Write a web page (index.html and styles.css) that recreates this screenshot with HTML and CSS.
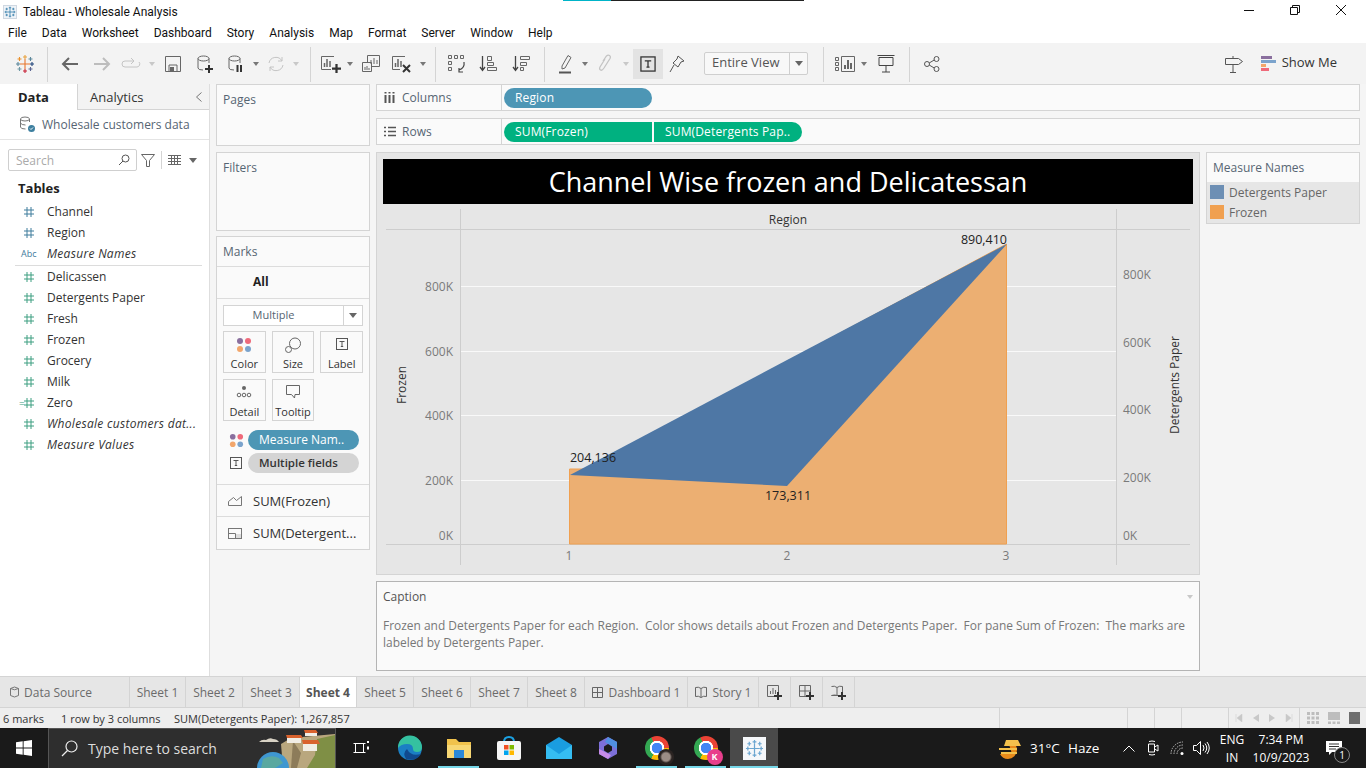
FILE: index.html
```html
<!DOCTYPE html>
<html lang="en">
<head>
    <meta charset="UTF-8">
    <meta name="viewport" content="width=device-width, initial-scale=1.0">
    <title>Tableau - Wholesale Analysis</title>
    <link rel="stylesheet" href="styles.css">
</head>
<body>
    <svg class="defs" width="0" height="0">
        <symbol id="hash" viewBox="0 0 12 12"><path d="M4 1v10M8 1v10M1 4h10M1 8h10" fill="none" stroke="currentColor" stroke-width="1"/></symbol>
        <symbol id="cross" viewBox="0 0 20 20"><g fill="none" stroke="currentColor" stroke-width="1.3"><path d="M10 5v10M5 10h10"/><path d="M10 1v4M8 3h4M10 15v4M8 17h4M1 10h4M3 8v4M15 10h4M17 8v4M4.500 3v4M2.500 5h4M15.500 3v4M13.500 5h4M4.500 13v4M2.500 15h4M15.500 13v4M13.500 15h4"/></g></symbol>
        <symbol id="t-box" viewBox="0 0 14 14"><rect x="1.500" y="1.500" width="11" height="11" fill="none" stroke="currentColor"/><path d="M4.500 4.500h5M7 4.500v5M5.800 9.500h2.400" fill="none" stroke="currentColor"/></symbol>
        <symbol id="dots" viewBox="0 0 16 16"><circle cx="4" cy="4" r="3" fill="#8a6f9e"/><circle cx="12" cy="4" r="3" fill="#ef6a7a"/><circle cx="4" cy="12" r="3" fill="#f2a66b"/><circle cx="12" cy="12" r="3" fill="#7ba3cc"/></symbol>
        <symbol id="plus" viewBox="0 0 8 8"><path d="M4 0v8M0 4h8" stroke="#333" stroke-width="2"/></symbol>
    </svg>

    <header class="titlebar">
        <span class="top-strip"><i class="strip-teal"></i><i class="strip-dark"></i></span>
        <svg class="title-logo" width="14" height="14"><rect x="0.500" y="0.500" width="13" height="13" fill="#eef3f8" stroke="#cfd8e2"/><use href="#cross" x="1" y="1" width="12" height="12" color="#2e79a8"/></svg>
        <span class="title-text">Tableau - Wholesale Analysis</span>
        <div class="window-btns">
            <svg width="12" height="12"><path d="M1 6.500h10" stroke="#111"/></svg>
            <svg width="12" height="12"><path d="M1.500 3.500h7v7h-7zM3.500 3.500v-2h7v7h-2" fill="none" stroke="#111"/></svg>
            <svg width="12" height="12"><path d="M1 1l10 10M11 1L1 11" stroke="#111"/></svg>
        </div>
    </header>

    <nav class="menubar">
        <span>File</span><span>Data</span><span>Worksheet</span><span>Dashboard</span><span>Story</span><span>Analysis</span><span>Map</span><span>Format</span><span>Server</span><span>Window</span><span>Help</span>
    </nav>

    <div class="toolbar">
        <span class="tb w33"><svg width="20" height="20" viewBox="0 0 20 20"><g fill="none" stroke-width="1.100"><path d="M10 5v10M5 10h10" stroke="#e8762d"/><path d="M10 1v4M8 3h4" stroke="#e8a23d"/><path d="M10 15v4M8 17h4" stroke="#c72035"/><path d="M1 10h4M3 8v4" stroke="#5b879b"/><path d="M15 10h4M17 8v4" stroke="#1f447b"/><path d="M4.500 3v4M2.500 5h4" stroke="#eb912b"/><path d="M15.500 3v4M13.500 5h4" stroke="#5b879b"/><path d="M4.500 13v4M2.500 15h4" stroke="#7099a6"/><path d="M15.500 13v4M13.500 15h4" stroke="#5c6692"/></g></svg></span>
        <i class="sep"></i>
        <span class="tb w32"><svg width="18" height="16"><path d="M17 8H2M8 2L2 8l6 6" fill="none" stroke="#666" stroke-width="2"/></svg></span>
        <span class="tb w32"><svg width="18" height="16"><path d="M1 8h15M10 2l6 6-6 6" fill="none" stroke="#bdbdbd" stroke-width="2"/></svg></span>
        <span class="tb w26"><svg width="20" height="12"><path d="M12 3H4a3 3 0 0 0 0 6h12a3 3 0 0 0 2-5M10 0l3 3-3 3" fill="none" stroke="#c4c4c4"/></svg></span>
        <span class="tb w16"><i class="caret off"></i></span>
        <span class="tb w26"><svg width="16" height="16"><path d="M.5.500h15v15H.5zM4 15V9h8v6" fill="none" stroke="#666"/><rect x="5" y="11" width="4" height="4" fill="#666"/></svg></span>
        <span class="tb w38"><svg width="16" height="18"><ellipse cx="6.500" cy="3.500" rx="5.500" ry="2.500" fill="none" stroke="#666"/><path d="M1 3.500V13q0 2 5 2M12 3.500V8" fill="none" stroke="#666"/><use href="#plus" x="8" y="10" width="8" height="8"/></svg></span>
        <span class="tb w24"><svg width="16" height="18"><ellipse cx="6.500" cy="3.500" rx="5.500" ry="2.500" fill="none" stroke="#666"/><path d="M1 3.500V13q0 2 5 2M12 3.500V8" fill="none" stroke="#666"/><path d="M9.500 10v7M13 10v7" stroke="#333" stroke-width="2"/></svg></span>
        <span class="tb w16"><i class="caret"></i></span>
        <span class="tb w24"><svg width="18" height="18"><path d="M2 8a7 7 0 0 1 13-2M16 10a7 7 0 0 1-13 2M15 2v4h-4M3 16v-4h4" fill="none" stroke="#c4c4c4"/></svg></span>
        <span class="tb w16"><i class="caret off"></i></span>
        <i class="sep"></i>
        <span class="tb w28"><svg width="20" height="18"><path d="M13 1.500H.5v13H10" fill="none" stroke="#666"/><path d="M3.500 12V8M6 12V4M9 12V6" stroke="#666" stroke-width="1.500"/><use href="#plus" x="11" y="9" width="9" height="9"/></svg></span>
        <span class="tb w10"><i class="caret"></i></span>
        <span class="tb w32"><svg width="18" height="18"><path d="M5.500 7V.5h12v11H9" fill="none" stroke="#666"/><path d="M.5 7.500h9v9h-9z" fill="#f3f3f3" stroke="#666"/><path d="M9 9V5M12 9V3M15 9V5M3 15v-3M5 15v-4M7 15v-2" stroke="#666"/></svg></span>
        <span class="tb w30"><svg width="20" height="18"><path d="M13 1.500H.5v13H8" fill="none" stroke="#666"/><path d="M3.500 12V8M6 12V4M9 12V6" stroke="#666" stroke-width="1.500"/><path d="M11 10l7 7M18 10l-7 7" stroke="#333" stroke-width="2"/></svg></span>
        <span class="tb w12"><i class="caret"></i></span>
        <i class="sep"></i>
        <span class="tb w30"><svg width="18" height="18"><path d="M.5.500h3v3h-3zM6.500.500h3v3h-3zM12.500.500h3v3h-3zM.5 6.500h3v3h-3zM.5 12.500h3v3h-3z" fill="none" stroke="#666"/><path d="M16 7q1 6-5 8M11 13v4h4M6 15" fill="none" stroke="#444" stroke-width="1.200"/></svg></span>
        <span class="tb w32"><svg width="18" height="18"><path d="M3.500 1v14M1 12l2.500 3.500L6 12" fill="none" stroke="#444" stroke-width="1.300"/><path d="M8.500 1.500h4v4h-4zM8.500 7.500h6v3h-6zM8.500 12.500h9v3h-9z" fill="none" stroke="#666"/></svg></span>
        <span class="tb w34"><svg width="18" height="18"><path d="M3.500 1v14M1 12l2.500 3.500L6 12" fill="none" stroke="#444" stroke-width="1.300"/><path d="M8.500 1.500h9v3h-9zM8.500 7.500h6v3h-6zM8.500 12.500h3v3h-3z" fill="none" stroke="#666"/></svg></span>
        <i class="sep"></i>
        <span class="tb w30"><svg width="14" height="20"><path d="M3 12L9 1.500l3 2-6 10.500-3 1z" fill="none" stroke="#666"/><path d="M0 18.500h12" stroke="#555" stroke-width="2"/></svg></span>
        <span class="tb w8"><i class="caret"></i></span>
        <span class="tb w32"><svg width="14" height="20"><path d="M5 7l3.500-5q1.500-1.500 3-.5t.5 3L6 14q-2 3-3.500 2T2 13l5-8" fill="none" stroke="#c4c4c4" stroke-width="1.300"/></svg></span>
        <span class="tb w10"><i class="caret off"></i></span>
        <span class="tb w30 tb-on"><svg width="18" height="18" color="#333"><use href="#t-box"/></svg></span>
        <span class="tb w28"><svg width="16" height="18"><path d="M9 1l6 5-3 1-3 5-5-4 4-4zM5 10l-4 7" fill="none" stroke="#555"/></svg></span>
        <div class="fit-select"><span class="fit-label">Entire View</span><span class="fit-arrow"><i class="caret dark"></i></span></div>
        <i class="sep"></i>
        <span class="tb w30"><svg width="20" height="16"><path d="M.5 1.500h3v3h-3zM.5 6.500h3v3h-3zM.5 11.500h3v3h-3zM6.500.5h13v15h-13z" fill="none" stroke="#666"/><path d="M10 13V9M13 13V4M16 13V7" stroke="#666" stroke-width="2"/></svg></span>
        <span class="tb w8"><i class="caret"></i></span>
        <span class="tb w35"><svg width="18" height="18"><path d="M.5.500h17M2 2.500h14v8H2zM9 10.500V17M5 17h8" fill="none" stroke="#444"/></svg></span>
        <i class="sep"></i>
        <span class="tb w32"><svg width="16" height="16"><circle cx="3" cy="8" r="2.500" fill="none" stroke="#555"/><circle cx="12.500" cy="3" r="2.500" fill="none" stroke="#555"/><circle cx="12.500" cy="13" r="2.500" fill="none" stroke="#555"/><path d="M5.200 7l5-3M5.200 9l5 3" stroke="#555"/></svg></span>
        <div class="tb-right">
            <span class="tb w32"><svg width="18" height="18"><path d="M.5 3.500h13l4 3-4 3H.5zM8 1v2.500M8 9.500V17M5 17.500h6" fill="none" stroke="#555"/></svg></span>
            <div class="show-me">
                <svg width="15" height="16"><rect y="0" width="11" height="3" fill="#8a6f9e"/><rect y="4" width="15" height="3" fill="#7ba3cc"/><rect y="8" width="5" height="3" fill="#f2a66b"/><rect y="12" width="8" height="3" fill="#ef6a7a"/></svg>
                <span>Show Me</span>
            </div>
        </div>
    </div>

    <main class="workspace">
        <aside class="data-pane">
            <div class="pane-tabs">
                <span class="pane-tab active">Data</span>
                <span class="pane-tab">Analytics<svg class="collapse" width="8" height="12"><path d="M6.500 1.500L1.500 6l5 4.500" fill="none" stroke="#777"/></svg></span>
            </div>
            <div class="source-row">
                <svg width="17" height="17"><ellipse cx="6" cy="3" rx="4.500" ry="2" fill="none" stroke="#777"/><path d="M1.500 3v8q0 2 5 2M10.500 3v3M1.500 7q1 2 5 2" fill="none" stroke="#777"/><circle cx="12.500" cy="12.500" r="3.500" fill="#3d7f9f"/><path d="M11 12.500l1 1 2-2" fill="none" stroke="#fff"/></svg>
                <span>Wholesale customers data</span>
            </div>
            <div class="search-row">
                <div class="search-box"><span>Search</span><svg width="12" height="12"><circle cx="7.500" cy="4.500" r="3.500" fill="none" stroke="#555"/><path d="M5 7l-4 4" stroke="#555"/></svg></div>
                <svg class="funnel" width="14" height="13"><path d="M.5.500h13L8.500 6.500v6h-3v-6z" fill="none" stroke="#666"/></svg>
                <i class="search-sep"></i>
                <svg class="list-icon" width="13" height="10"><path d="M0 .5h13M0 3.500h13M0 6.500h13M0 9.500h13M3.500 0v10M6.500 0v10M9.500 0v10" stroke="#666"/></svg>
                <i class="caret dark"></i>
            </div>
            <h2 class="tables-title">Tables</h2>
            <ul class="field-list">
                <li class="dim"><svg width="12" height="12"><use href="#hash"/></svg><span>Channel</span></li>
                <li class="dim"><svg width="12" height="12"><use href="#hash"/></svg><span>Region</span></li>
                <li class="dim gen"><b class="abc">Abc</b><span>Measure Names</span></li>
                <li class="divider"></li>
                <li class="mea"><svg width="12" height="12"><use href="#hash"/></svg><span>Delicassen</span></li>
                <li class="mea"><svg width="12" height="12"><use href="#hash"/></svg><span>Detergents Paper</span></li>
                <li class="mea"><svg width="12" height="12"><use href="#hash"/></svg><span>Fresh</span></li>
                <li class="mea"><svg width="12" height="12"><use href="#hash"/></svg><span>Frozen</span></li>
                <li class="mea"><svg width="12" height="12"><use href="#hash"/></svg><span>Grocery</span></li>
                <li class="mea"><svg width="12" height="12"><use href="#hash"/></svg><span>Milk</span></li>
                <li class="mea calc"><b class="eq">=</b><svg width="12" height="12"><use href="#hash"/></svg><span>Zero</span></li>
                <li class="mea gen"><svg width="12" height="12"><use href="#hash"/></svg><span>Wholesale customers dat...</span></li>
                <li class="mea gen"><svg width="12" height="12"><use href="#hash"/></svg><span>Measure Values</span></li>
            </ul>
        </aside>

        <section class="cards">
            <div class="card pages-card"><h3>Pages</h3></div>
            <div class="card filters-card"><h3>Filters</h3></div>
            <div class="card marks-card">
                <h3 class="marks-head">Marks</h3>
                <div class="marks-all">All</div>
                <div class="marks-body">
                    <div class="mark-select"><span>Multiple</span><span class="mark-arrow"><i class="caret dark"></i></span></div>
                    <div class="mark-grid">
                        <div class="mark-btn"><svg width="16" height="16"><use href="#dots"/></svg><span>Color</span></div>
                        <div class="mark-btn"><svg width="16" height="16"><circle cx="10" cy="6.500" r="5.500" fill="none" stroke="#666"/><circle cx="3.500" cy="12.500" r="3" fill="#fafafa" stroke="#666"/></svg><span>Size</span></div>
                        <div class="mark-btn"><svg width="14" height="14" color="#555"><use href="#t-box"/></svg><span>Label</span></div>
                        <div class="mark-btn"><svg width="16" height="14"><circle cx="8" cy="3" r="2" fill="#666"/><circle cx="3" cy="10" r="1.800" fill="none" stroke="#666"/><circle cx="8" cy="10" r="1.800" fill="none" stroke="#666"/><circle cx="13" cy="10" r="1.800" fill="none" stroke="#666"/></svg><span>Detail</span></div>
                        <div class="mark-btn"><svg width="16" height="14"><path d="M1.500.5h13v9H10l-.5 3.500-3-3.500h-5z" fill="none" stroke="#666"/></svg><span>Tooltip</span></div>
                    </div>
                    <div class="mark-pill-row"><svg width="15" height="15"><use href="#dots"/></svg><span class="pill pill-blue">Measure Nam..</span></div>
                    <div class="mark-pill-row"><svg width="14" height="14" color="#555"><use href="#t-box"/></svg><span class="pill pill-grey">Multiple fields</span></div>
                </div>
                <div class="mark-layer"><svg width="14" height="12"><path d="M.5 10.500v-4l5-4 3 3 5-4v9z" fill="none" stroke="#777"/></svg><span>SUM(Frozen)</span></div>
                <div class="mark-layer"><svg width="14" height="11"><rect x=".5" y=".5" width="13" height="10" fill="none" stroke="#777"/><path d="M.5 5.500h7v5" fill="none" stroke="#777"/><rect x="8" y="6" width="5" height="4" fill="#ddd"/></svg><span>SUM(Detergent...</span></div>
            </div>
        </section>

        <section class="view-col">
            <div class="shelf">
                <div class="shelf-label"><svg width="12" height="11"><path d="M1.500 3v8M5.500 3v8M9.500 3v8" stroke="#555" stroke-width="2"/><path d="M1.500 0v1.500M5.500 0v1.500M9.500 0v1.500" stroke="#555" stroke-width="2"/></svg><span>Columns</span></div>
                <div class="shelf-pills"><span class="shelf-pill blue round-both">Region</span></div>
            </div>
            <div class="shelf">
                <div class="shelf-label"><svg width="12" height="11"><path d="M0 1.500h2M4 1.500h8M0 5.500h2M4 5.500h8M0 9.500h2M4 9.500h8" stroke="#555" stroke-width="1.500"/></svg><span>Rows</span></div>
                <div class="shelf-pills"><span class="shelf-pill green round-left">SUM(Frozen)</span><span class="shelf-pill green round-right">SUM(Detergents Pap..</span></div>
            </div>
            <div class="view-row">
                <div class="view-main">
                    <div class="chart-panel">
                        <div class="viz-title">Channel Wise frozen and Delicatessan</div>
                        <svg class="chart" width="810" height="366" viewBox="383 204 810 366">
                            <g stroke="#fff" stroke-opacity=".75">
                                <path d="M461 286.500H1116M461 351.500H1116M461 415.500H1116M461 480.500H1116"/>
                            </g>
                            <g stroke="#cdcdcd">
                                <path d="M386 229.500H1190M386 544.500H1190M460.500 209V565M1116.500 209V565"/>
                            </g>
                            <polygon class="area-orange" points="569.500,544 569.500,469 586,469 1006.500,244 1006.500,544"/>
                            <polygon class="area-blue" points="570,475 787,360 1007,244 787,486"/>
                            <text class="axis-tick" x="453" y="291" text-anchor="end">800K</text>
                            <text class="axis-tick" x="453" y="356" text-anchor="end">600K</text>
                            <text class="axis-tick" x="453" y="420" text-anchor="end">400K</text>
                            <text class="axis-tick" x="453" y="485" text-anchor="end">200K</text>
                            <text class="axis-tick" x="453" y="540" text-anchor="end">0K</text>
                            <text class="axis-tick" x="1123" y="279">800K</text>
                            <text class="axis-tick" x="1123" y="347">600K</text>
                            <text class="axis-tick" x="1123" y="414">400K</text>
                            <text class="axis-tick" x="1123" y="482">200K</text>
                            <text class="axis-tick" x="1123" y="540">0K</text>
                            <text class="axis-tick" x="569" y="560" text-anchor="middle">1</text>
                            <text class="axis-tick" x="787" y="560" text-anchor="middle">2</text>
                            <text class="axis-tick" x="1006" y="560" text-anchor="middle">3</text>
                            <text class="axis-title" x="788" y="224" text-anchor="middle">Region</text>
                            <text class="axis-title" transform="translate(406 385) rotate(-90)" text-anchor="middle">Frozen</text>
                            <text class="axis-title" transform="translate(1179 385) rotate(-90)" text-anchor="middle">Detergents Paper</text>
                            <text class="mark-label" x="593" y="462" text-anchor="middle">204,136</text>
                            <text class="mark-label" x="788" y="500" text-anchor="middle">173,311</text>
                            <text class="mark-label" x="1007" y="244" text-anchor="end">890,410</text>
                        </svg>
                    </div>
                    <div class="caption">
                        <div class="caption-head"><span>Caption</span><i class="caret off"></i></div>
                        <p>Frozen and Detergents Paper for each Region.&nbsp; Color shows details about Frozen and Detergents Paper.&nbsp; For pane Sum of Frozen:&nbsp; The marks are labeled by Detergents Paper.</p>
                    </div>
                </div>
                <div class="legend">
                    <h3>Measure Names</h3>
                    <div class="legend-rows">
                        <div class="legend-row"><i class="swatch swatch-blue"></i><span>Detergents Paper</span></div>
                        <div class="legend-row"><i class="swatch swatch-orange"></i><span>Frozen</span></div>
                    </div>
                </div>
            </div>
        </section>
    </main>

    <div class="tabbar">
        <span class="tab tab-source"><svg width="9" height="12"><path d="M.5 2.500q4-3 8 0v7q-4 3-8 0zM.5 2.500q4 2.500 8 0" fill="none" stroke="#777"/></svg>Data Source</span>
        <span class="tab tab-sheet">Sheet 1</span>
        <span class="tab tab-sheet">Sheet 2</span>
        <span class="tab tab-sheet">Sheet 3</span>
        <span class="tab tab-sheet current">Sheet 4</span>
        <span class="tab tab-sheet">Sheet 5</span>
        <span class="tab tab-sheet">Sheet 6</span>
        <span class="tab tab-sheet">Sheet 7</span>
        <span class="tab tab-sheet">Sheet 8</span>
        <span class="tab tab-dash"><svg width="11" height="11"><path d="M.5.500h10v10H.5zM5.500.5v10M.5 5.500h10" fill="none" stroke="#666"/></svg>Dashboard 1</span>
        <span class="tab tab-story"><svg width="12" height="12"><path d="M.5 1.500q3-1 5.500 1 2.500-2 5.500-1v9q-3-1-5.500 1-2.500-2-5.500-1zM6 2.500v9" fill="none" stroke="#666"/></svg>Story 1</span>
        <span class="tab tab-add"><svg width="15" height="15"><path d="M.5.500h11V7M7 11.500H.5V.5" fill="none" stroke="#666"/><path d="M3.500 9V6M6 9V3M8.500 9V5" stroke="#666"/><use href="#plus" x="7" y="7" width="8" height="8"/></svg></span>
        <span class="tab tab-add"><svg width="15" height="15"><path d="M11.500 7V.5H.5v11H7M6 .5v11M.5 6h11" fill="none" stroke="#666"/><use href="#plus" x="7" y="7" width="8" height="8"/></svg></span>
        <span class="tab tab-add"><svg width="15" height="15"><path d="M.5 1.500q3-1 5.500 1 2.500-2 5.500-1V7M7 10.500q-4-1-6.500 0zM6 2.500V10" fill="none" stroke="#666"/><use href="#plus" x="7" y="7" width="8" height="8"/></svg></span>
    </div>

    <footer class="statusbar">
        <span class="st-marks">6 marks</span>
        <span class="st-size">1 row by 3 columns</span>
        <span class="st-sum">SUM(Detergents Paper): 1,267,857</span>
        <div class="st-cells">
            <i class="st-cell w128"></i><i class="st-cell w27"></i><i class="st-cell w27"></i><i class="st-cell w47"></i>
            <span class="st-cell st-nav">
                <svg width="8" height="8"><path d="M1 0v8M7 0v8L2 4z" fill="#c8c8c8" stroke="#c8c8c8" stroke-width=".5"/></svg>
                <svg width="6" height="8"><path d="M6 0v8L0 4z" fill="#c8c8c8"/></svg>
                <svg width="6" height="8"><path d="M0 0v8l6-4z" fill="#c8c8c8"/></svg>
                <svg width="8" height="8"><path d="M7 0v8M1 0v8l5-4z" fill="#c8c8c8" stroke="#c8c8c8" stroke-width=".5"/></svg>
            </span>
            <span class="st-views">
                <svg width="12" height="12"><path d="M0 0h3v3H0zM4.500 0h3v3h-3zM9 0h3v3H9zM0 4.500h3v3H0zM4.500 4.500h3v3h-3zM9 4.500h3v3H9zM0 9h3v3H0zM4.500 9h3v3h-3zM9 9h3v3H9z" fill="#bdbdbd"/></svg>
                <svg width="12" height="12"><path d="M0 0h12v8H0zM0 9.500h3V12H0zM4.500 9.500h3V12h-3zM9 9.500h3V12H9z" fill="#bdbdbd"/></svg>
                <svg width="11" height="12"><rect width="11" height="12" fill="#6e6e6e"/></svg>
            </span>
        </div>
    </footer>

    <div class="taskbar">
        <span class="start"><svg width="16" height="16"><path d="M0 2.300l6.700-1v6.300H0zM7.600 1.200L16 0v7.600H7.600zM0 8.400h6.700v6.300l-6.700-1zM7.600 8.400H16V16l-8.400-1.200z" fill="#fff"/></svg></span>
        <div class="task-search">
            <svg width="17" height="17"><circle cx="10.500" cy="6.500" r="5.500" fill="none" stroke="#eee" stroke-width="1.200"/><path d="M6.500 10.500L1 16" stroke="#eee" stroke-width="1.300"/></svg>
            <span>Type here to search</span>
            <svg class="search-art" width="78" height="39" viewBox="0 0 78 39">
                <path d="M2 13q3-3 7-2 4-3 7-1 4 0 6 3z" fill="#d8d2c4"/>
                <path d="M24 15L34 9 56 7 78 5V39H26z" fill="#b9a77e"/>
                <path d="M60 10L78 6V39H50L58 26z" fill="#7f8f45"/>
                <path d="M36 12l8 12-4 15h-6z" fill="#8d7c5a"/>
                <circle cx="16" cy="39" r="16" fill="#3f97d0"/>
                <path d="M6 30q8-5 16-1l4 5-8 5H4z" fill="#5aa8a0"/>
                <path d="M30 9h14v5H30zM46 15h14v7H46zM48 3h12v4H48z" fill="#f1ede4"/>
                <path d="M29 6h15l2 3H30zM45 11h16l2 4H46zM47 1h12l2 3H48z" fill="#d9622d"/>
            </svg>
        </div>
        <span class="task-icon w49"><svg width="16" height="16"><path d="M.5 3.500h12M.5 12.500h12M2.500 3.500v9M10.500 3.500v9" fill="none" stroke="#fff"/><path d="M14 1h2v2h-2zM14 6.500h2v3h-2z" fill="#fff"/></svg></span>
        <span class="task-icon w49"><svg width="26" height="26" viewBox="0 0 26 26"><circle cx="13" cy="13" r="12" fill="#1b7fc4"/><path d="M1 13A12 12 0 0 1 25 12q0 5-5 5-4 0-4-3 0-5-6-5-6 0-9 4z" fill="#35c1a0"/><path d="M9 24q-4-6 1-10 4 8 14 5-5 8-15 5z" fill="#104a8e"/></svg></span>
        <span class="task-icon w49 running"><svg width="24" height="20"><path d="M0 1h9l3 3h12v16H0z" fill="#f0c24c"/><path d="M0 7h24v13H0z" fill="#f7d774"/><rect x="7" y="12" width="10" height="8" fill="#2b88d8"/></svg></span>
        <span class="task-icon w51"><svg width="24" height="24"><path d="M7 6q0-5 5-5t5 5" fill="none" stroke="#1ba1e2" stroke-width="2"/><rect y="5" width="24" height="19" rx="2" fill="#f6f6f6"/><rect x="7" y="9" width="4.500" height="4.500" fill="#f25022"/><rect x="12.500" y="9" width="4.500" height="4.500" fill="#7fba00"/><rect x="7" y="14.500" width="4.500" height="4.500" fill="#00a4ef"/><rect x="12.500" y="14.500" width="4.500" height="4.500" fill="#ffb900"/></svg></span>
        <span class="task-icon w49"><svg width="26" height="22"><path d="M0 8L13 0l13 8v14H0z" fill="#1a9de0"/><path d="M0 8l13 9 13-9v14H0z" fill="#35bdf2"/></svg></span>
        <span class="task-icon w49"><svg width="22" height="24"><path d="M11 1l9 5v12l-9 5-9-5V6z" fill="#7c6fd8"/><path d="M11 1l9 5v7L8 6z" fill="#4f8fe0"/><path d="M2 13l12 6-3 4-9-5z" fill="#c68be8"/><path d="M11 8l4 2.500v4L11 17l-4-2.500v-4z" fill="#1a1a1a"/></svg></span>
        <span class="task-icon w49 running"><span class="chrome"><i class="avatar avatar-photo"></i></span></span>
        <span class="task-icon w49 running"><span class="chrome"><i class="avatar avatar-k">K</i></span></span>
        <span class="task-icon w48 running active"><svg width="23" height="23"><rect width="23" height="23" fill="#f5f7fa"/><use href="#cross" x="2" y="2" width="19" height="19" color="#6aa5d0"/></svg></span>
        <div class="tray">
            <svg class="weather" width="25" height="23"><path d="M10 4a9 9 0 1 1 0 18 9 9 0 0 1-8-5h12z" fill="#e88a1a"/><path d="M8 3h12l3 6H6zM1 11h18v2H1zM3 15h16v2H3z" fill="#f3c14c"/></svg>
            <span class="temp">31°C</span>
            <span class="haze">Haze</span>
            <svg class="tray-i chev" width="12" height="7"><path d="M.5 6.500L6 1l5.500 5.500" fill="none" stroke="#fff"/></svg>
            <svg class="tray-i meet" width="12" height="16"><path d="M1.500 4h6v8h-6zM7.500 7l3.500-2v6l-3.500-2M2 1.500q3-1 6 0M2 14.500q3 1 6 0" fill="none" stroke="#fff"/></svg>
            <svg class="tray-i wifi" width="14" height="14"><path d="M1 13A12 12 0 0 1 13 1M4 13a9 9 0 0 1 9-9M7 13a6 6 0 0 1 6-6" fill="none" stroke="#bbb" stroke-dasharray="1.500 1"/><circle cx="12" cy="12.500" r="1.500" fill="#fff"/></svg>
            <svg class="tray-i vol" width="17" height="14"><path d="M.5 4.500h3l4-4v13l-4-4h-3zM10 4q2 3 0 6M12 2.500q3.500 4.500 0 9M14 1q4.500 6 0 12" fill="none" stroke="#fff"/></svg>
            <div class="lang"><span>ENG</span><span>IN</span></div>
            <div class="clock"><span>7:34 PM</span><span>10/9/2023</span></div>
            <span class="notify"><svg width="16" height="15"><path d="M0 0h16v11H6l-3 3v-3H0z" fill="#fff"/><path d="M3 3h10M3 5.500h10M3 8h7" stroke="#333"/></svg><b class="notify-count">1</b></span>
        </div>
    </div>
</body>
</html>
```

FILE: styles.css
```css
* {
    box-sizing: border-box;
}

html, body {
    margin: 0;
    padding: 0;
}

body {
    width: 1366px;
    height: 768px;
    overflow: hidden;
    display: flex;
    flex-direction: column;
    font-family: "Open Sans", "Noto Sans", sans-serif;
    font-size: 12px;
    color: #333;
    background-color: #f5f5f5;
}

h2, h3, p, ul {
    margin: 0;
    padding: 0;
    font-weight: normal;
}

i {
    display: block;
    font-style: normal;
}

svg {
    display: block;
    flex-shrink: 0;
}

.defs {
    position: absolute;
}

.caret {
    width: 0;
    height: 0;
    border-left: 3.500px solid transparent;
    border-right: 3.500px solid transparent;
    border-top: 4px solid #777;
}

.caret.off {
    border-top-color: #c8c8c8;
}

.caret.dark {
    border-left-width: 4px;
    border-right-width: 4px;
    border-top: 5px solid #666;
}

/* title and menu */
.titlebar {
    position: relative;
    height: 21px;
    flex-shrink: 0;
    display: flex;
    align-items: center;
    padding: 2px 0 0 3px;
    background-color: #fff;
    color: #111;
    font-family: Roboto, sans-serif;
}

.top-strip {
    position: absolute;
    left: 563px;
    top: 0;
    display: flex;
    height: 1px;
}

.strip-teal {
    width: 48px;
    background-color: #00b4c8;
}

.strip-dark {
    width: 193px;
    background-color: #222;
}

.title-text {
    margin-left: 6px;
    font-size: 12px;
}

.window-btns {
    margin-left: auto;
    display: flex;
    gap: 34px;
    padding-right: 19px;
    margin-top: -3px;
}

.menubar {
    height: 22px;
    flex-shrink: 0;
    display: flex;
    gap: 15px;
    align-items: center;
    padding: 2px 0 0 8px;
    background-color: #fff;
    color: #111;
    font-family: Roboto, sans-serif;
}

/* toolbar */
.toolbar {
    height: 41px;
    flex-shrink: 0;
    display: flex;
    align-items: center;
    padding-left: 8px;
    background-color: #f3f3f3;
}

.tb {
    height: 30px;
    display: flex;
    align-items: center;
    justify-content: center;
}

.w8 { width: 8px; }
.w10 { width: 10px; }
.w12 { width: 12px; }
.w16 { width: 16px; }
.w24 { width: 24px; }
.w26 { width: 26px; }
.w28 { width: 28px; }
.w30 { width: 30px; }
.w32 { width: 32px; }
.w33 { width: 33px; }
.w34 { width: 34px; }
.w35 { width: 35px; }
.w38 { width: 38px; }

.tb-on {
    margin-left: 2px;
    background-color: #e3e3e3;
}

.sep {
    width: 1px;
    height: 35px;
    margin: 1px 6px 0;
    background-color: #d4d4d4;
}

.fit-select {
    width: 104px;
    height: 23px;
    margin: 0 9px 0 13px;
    display: flex;
    border: 1px solid #cfcfcf;
    border-radius: 2px;
    background-color: #f8f8f8;
    font-size: 13px;
    color: #555;
}

.fit-label {
    flex: 1;
    padding-left: 7px;
    line-height: 19px;
}

.fit-arrow {
    width: 18px;
    display: flex;
    align-items: center;
    justify-content: center;
    border-left: 1px solid #cfcfcf;
}

.tb-right {
    margin-left: auto;
    display: flex;
    align-items: center;
    padding-right: 29px;
}

.tb-right .tb {
    margin-right: 11px;
}

.show-me {
    display: flex;
    align-items: center;
    gap: 6px;
    font-size: 13px;
    line-height: 15px;
}

.show-me span {
    margin-top: -2px;
}

/* main */
.workspace {
    flex: 1;
    min-height: 0;
    display: flex;
    border-bottom: 1px solid #d4d4d4;
}

.data-pane {
    width: 210px;
    flex-shrink: 0;
    border-right: 1px solid #dedede;
    background-color: #fff;
}

.pane-tabs {
    height: 26px;
    display: flex;
    background-color: #f3f3f3;
}

.pane-tab {
    flex: 1;
    position: relative;
    padding-left: 12px;
    line-height: 26px;
    font-size: 13px;
    border-left: 1px solid #d4d4d4;
    border-bottom: 1px solid #d4d4d4;
}

.pane-tab.active {
    flex: 0 0 77px;
    padding-left: 18px;
    font-weight: 700;
    color: #222;
    background-color: #fff;
    border: 0;
}

.collapse {
    position: absolute;
    right: 6px;
    top: 7px;
}

.source-row {
    height: 30px;
    display: flex;
    align-items: center;
    gap: 6px;
    padding-left: 19px;
    border-bottom: 1px solid #e4e4e4;
    color: #566573;
    font-size: 12px;
}

.search-row {
    display: flex;
    align-items: center;
    margin-top: 9px;
    padding-left: 8px;
}

.search-box {
    width: 129px;
    height: 22px;
    display: flex;
    align-items: center;
    justify-content: space-between;
    padding: 0 6px 0 7px;
    border: 1px solid #cfcfcf;
    border-radius: 2px;
    color: #aaa;
}

.funnel {
    margin-left: 4px;
}

.search-sep {
    width: 1px;
    height: 18px;
    margin: 0 6px;
    background-color: #d4d4d4;
}

.list-icon {
    margin-right: 8px;
}

.tables-title {
    margin: 8px 0 0 18px;
    height: 18px;
    font-size: 13px;
    font-weight: 700;
    color: #222;
    line-height: 18px;
}

.field-list {
    list-style: none;
    margin-top: 4px;
}

.field-list li {
    position: relative;
    height: 21px;
    display: flex;
    align-items: center;
    padding-left: 23px;
}

.field-list li span {
    margin-left: 12px;
    white-space: nowrap;
}

.field-list li.divider {
    height: 1px;
    margin: 1px 7px 0 15px;
    padding: 0;
    background-color: #dcdcdc;
}

.dim svg, .abc {
    color: #3f7c9c;
}

.mea svg, .eq {
    color: #3d9e80;
}

.gen span {
    font-style: italic;
    letter-spacing: .3px;
}

.abc {
    position: absolute;
    left: 21px;
    font-size: 9px;
    font-weight: 400;
}

.abc + span {
    margin-left: 24px !important;
}

.eq {
    position: absolute;
    left: 19px;
    font-size: 10px;
    font-weight: 400;
}

/* cards */
.cards {
    width: 154px;
    flex-shrink: 0;
    margin-left: 6px;
}

.card {
    border: 1px solid #d4d4d4;
    background-color: #fafafa;
}

.card h3 {
    padding: 6px;
    color: #566573;
    font-size: 12px;
}

.pages-card {
    height: 62px;
}

.filters-card {
    height: 79px;
    margin-top: 6px;
}

.marks-card {
    height: 314px;
    margin-top: 5px;
}

.card h3.marks-head {
    height: 30px;
    padding: 6px;
    border-bottom: 1px solid #dcdcdc;
}

.marks-all {
    height: 32px;
    padding-left: 36px;
    line-height: 30px;
    font-weight: 700;
    color: #222;
    border-bottom: 1px solid #dcdcdc;
}

.marks-body {
    height: 186px;
    padding: 6px 6px 0;
    border-bottom: 1px solid #dcdcdc;
}

.mark-select {
    height: 21px;
    display: flex;
    border: 1px solid #d4d4d4;
    background-color: #fff;
    font-size: 11px;
    color: #566573;
}

.mark-select span:first-child {
    flex: 1;
    padding-right: 20px;
    text-align: center;
    line-height: 18px;
}

.mark-arrow {
    width: 19px;
    display: flex;
    align-items: center;
    justify-content: center;
    border-left: 1px solid #d4d4d4;
}

.mark-grid {
    display: grid;
    grid-template-columns: repeat(3, 1fr);
    gap: 6px;
    margin-top: 5px;
}

.mark-btn {
    height: 42px;
    display: flex;
    flex-direction: column;
    align-items: center;
    justify-content: space-between;
    padding: 5px 0 1px;
    border: 1px solid #d4d4d4;
    font-size: 11px;
}

.mark-pill-row {
    display: flex;
    align-items: center;
    height: 20px;
    margin-top: 3px;
    padding-left: 6px;
}

.mark-grid + .mark-pill-row {
    margin-top: 9px;
}

.pill {
    width: 111px;
    height: 20px;
    margin: 0 4px 0 auto;
    padding-left: 11px;
    border-radius: 10px;
    line-height: 19px;
    font-size: 12px;
}

.pill-blue {
    background-color: #4d96b5;
    color: #fff;
}

.pill-grey {
    background-color: #d4d4d4;
    font-size: 11.500px;
    font-weight: 600;
}

.mark-layer {
    height: 32px;
    display: flex;
    align-items: center;
    gap: 11px;
    padding-left: 11px;
    border-bottom: 1px solid #dcdcdc;
    font-size: 13px;
}

.mark-layer:last-child {
    border-bottom: 0;
}

/* shelves and view */
.view-col {
    width: 984px;
    flex-shrink: 0;
    margin-left: 6px;
}

.shelf {
    height: 27px;
    display: flex;
    margin-bottom: 7px;
    border: 1px solid #d4d4d4;
    background-color: #fafafa;
}

.shelf-label {
    width: 125px;
    display: flex;
    align-items: center;
    gap: 6px;
    padding-left: 7px;
    border-right: 1px solid #d4d4d4;
    color: #566573;
}

.shelf-pills {
    display: flex;
    align-items: center;
    gap: 2px;
    padding-left: 2px;
}

.shelf-pill {
    width: 148px;
    height: 20px;
    padding-left: 11px;
    line-height: 19px;
    color: #fff;
    letter-spacing: .15px;
    white-space: nowrap;
}

.blue {
    background-color: #4d96b5;
}

.green {
    background-color: #00b180;
}

.round-both {
    border-radius: 10px;
}

.round-left {
    border-radius: 10px 0 0 10px;
}

.round-right {
    border-radius: 0 10px 10px 0;
}

.view-row {
    display: flex;
    gap: 6px;
    align-items: flex-start;
}

.view-main {
    width: 824px;
    flex-shrink: 0;
}

.chart-panel {
    height: 423px;
    padding: 6px;
    border: 1px solid #d4d4d4;
    background-color: #e6e6e6;
}

.viz-title {
    height: 45px;
    background-color: #000;
    color: #fff;
    text-align: center;
    font-size: 27px;
    line-height: 45px;
}

.chart {
    overflow: visible;
}

.area-orange {
    fill: #ecaf72;
    stroke: #f0a050;
    stroke-width: 1;
}

.area-blue {
    fill: #4e77a5;
}

.axis-tick {
    font-size: 12px;
    fill: #7a7a7a;
}

.axis-title {
    font-size: 12px;
    fill: #333;
}

.mark-label {
    font-size: 12.500px;
    fill: #222;
}

.caption {
    height: 90px;
    margin-top: 6px;
    padding: 6px 6px;
    border: 1px solid #b4b4b4;
    background-color: #fafafa;
    color: #777;
    font-size: 11.950px;
}

.caption-head {
    display: flex;
    align-items: center;
    justify-content: space-between;
    color: #555;
    font-size: 12px;
}

.caption p {
    margin-top: 12px;
    line-height: 17px;
}

.legend {
    width: 154px;
    flex-shrink: 0;
    border: 1px solid #d4d4d4;
    background-color: #fafafa;
}

.legend h3 {
    height: 29px;
    padding-left: 6px;
    line-height: 29px;
    color: #566573;
    font-size: 12px;
}

.legend-rows {
    height: 41px;
    background-color: #e6e6e6;
}

.legend-row {
    height: 20px;
    display: flex;
    align-items: center;
    gap: 5px;
    padding-left: 3px;
    color: #666;
}

.swatch {
    width: 14px;
    height: 14px;
}

.swatch-blue {
    background-color: #6d8fb4;
}

.swatch-orange {
    background-color: #f0a050;
}

/* sheet tabs */
.tabbar {
    height: 31px;
    flex-shrink: 0;
    display: flex;
    background-color: #e6e6e6;
    border-bottom: 1px solid #d4d4d4;
}

.tab {
    height: 30px;
    display: flex;
    align-items: center;
    justify-content: center;
    gap: 6px;
    border-right: 1px solid #d4d4d4;
    color: #6b6b6b;
}

.tab-source {
    width: 130px;
    justify-content: flex-start;
    gap: 5px;
    padding-left: 10px;
}

.tab-sheet {
    width: 57px;
}

.tab-sheet:nth-child(2) {
    width: 56px;
}

.tab-sheet.current {
    background-color: #fff;
    font-weight: 700;
    color: #555;
}

.tab-dash {
    width: 103px;
}

.tab-story {
    width: 71px;
}

.tab-add {
    width: 32px;
}

/* status bar */
.statusbar {
    height: 20px;
    flex-shrink: 0;
    position: relative;
    display: flex;
    align-items: center;
    background-color: #eeeeee;
    font-size: 11px;
    color: #333;
    white-space: nowrap;
}

.st-marks {
    margin-left: 3px;
    width: 58px;
}

.st-size {
    width: 113px;
}

.st-cells {
    margin-left: auto;
    height: 20px;
    display: flex;
    width: 367px;
}

.st-cell {
    border-left: 1px solid #d4d4d4;
}

.w128 { width: 128px; }
.w27 { width: 27px; }
.w47 { width: 47px; }

.st-nav {
    width: 71px;
    display: flex;
    align-items: center;
    gap: 10px;
    padding-left: 6px;
}

.st-views {
    flex: 1;
    display: flex;
    align-items: center;
    gap: 9px;
    padding-left: 7px;
    border-left: 1px solid #d4d4d4;
}

/* windows taskbar */
.taskbar {
    height: 40px;
    flex-shrink: 0;
    display: flex;
    align-items: center;
    background-color: #1a1a1a;
    color: #fff;
}

.start {
    width: 48px;
    display: flex;
    justify-content: center;
}

.task-search {
    position: relative;
    width: 288px;
    height: 40px;
    display: flex;
    align-items: center;
    padding-left: 12px;
    gap: 10px;
    border: 1px solid #555;
    border-bottom-width: 0;
    background-color: #2e2e2e;
    color: #ddd;
    font-size: 14px;
}

.search-art {
    position: absolute;
    right: 0;
    bottom: 0;
}

.task-icon {
    position: relative;
    height: 40px;
    display: flex;
    align-items: center;
    justify-content: center;
}

.w48 { width: 48px; }
.w49 { width: 49px; }
.w51 { width: 51px; }

.task-icon.running::after {
    content: "";
    position: absolute;
    left: 4px;
    right: 4px;
    bottom: 0;
    height: 2px;
    background-color: #76d7e8;
}

.task-icon.active {
    background-color: #4a4a4a;
}

.task-icon.active::after {
    left: 0;
    right: 0;
}

.chrome {
    position: relative;
    width: 24px;
    height: 24px;
    border-radius: 50%;
    background: radial-gradient(circle, #4285f4 0 5px, #fff 5.500px 7px, transparent 7.500px), conic-gradient(from -30deg, #ea4335 0 120deg, #fbbc05 120deg 240deg, #34a853 240deg 360deg);
}

.avatar {
    position: absolute;
    right: -5px;
    bottom: -5px;
    width: 16px;
    height: 16px;
    border-radius: 50%;
    font-size: 9px;
    line-height: 16px;
    text-align: center;
}

.avatar-photo {
    background: radial-gradient(circle, #9b8d86 0 4px, #2b2422 6px);
}

.avatar-k {
    background-color: #e83e8c;
    font-weight: 700;
}

.tray {
    margin-left: auto;
    display: flex;
    align-items: center;
    height: 40px;
    font-size: 13px;
    white-space: nowrap;
}

.weather {
    margin-right: 7px;
}

.temp {
    font-size: 13.500px;
    width: 38px;
}

.haze {
    font-size: 13.500px;
    width: 30px;
}

.chev {
    margin-left: 25px;
}

.meet {
    margin-left: 12px;
}

.wifi {
    margin-left: 11px;
}

.vol {
    margin-left: 9px;
}

.lang, .clock {
    display: flex;
    flex-direction: column;
    align-items: center;
    gap: 1px;
    font-size: 12px;
    line-height: 17px;
}

.lang {
    width: 30px;
    margin-left: 7px;
}

.clock {
    width: 64px;
    margin-left: 2px;
}

.notify {
    position: relative;
    width: 33px;
    margin: 0 16px 0 4px;
    display: flex;
    justify-content: center;
}

.notify-count {
    position: absolute;
    right: 0;
    top: 6px;
    width: 16px;
    height: 16px;
    border: 1px solid #888;
    border-radius: 50%;
    background-color: #1a1a1a;
    font-size: 10px;
    font-weight: 400;
    line-height: 14px;
    text-align: center;
}
```
